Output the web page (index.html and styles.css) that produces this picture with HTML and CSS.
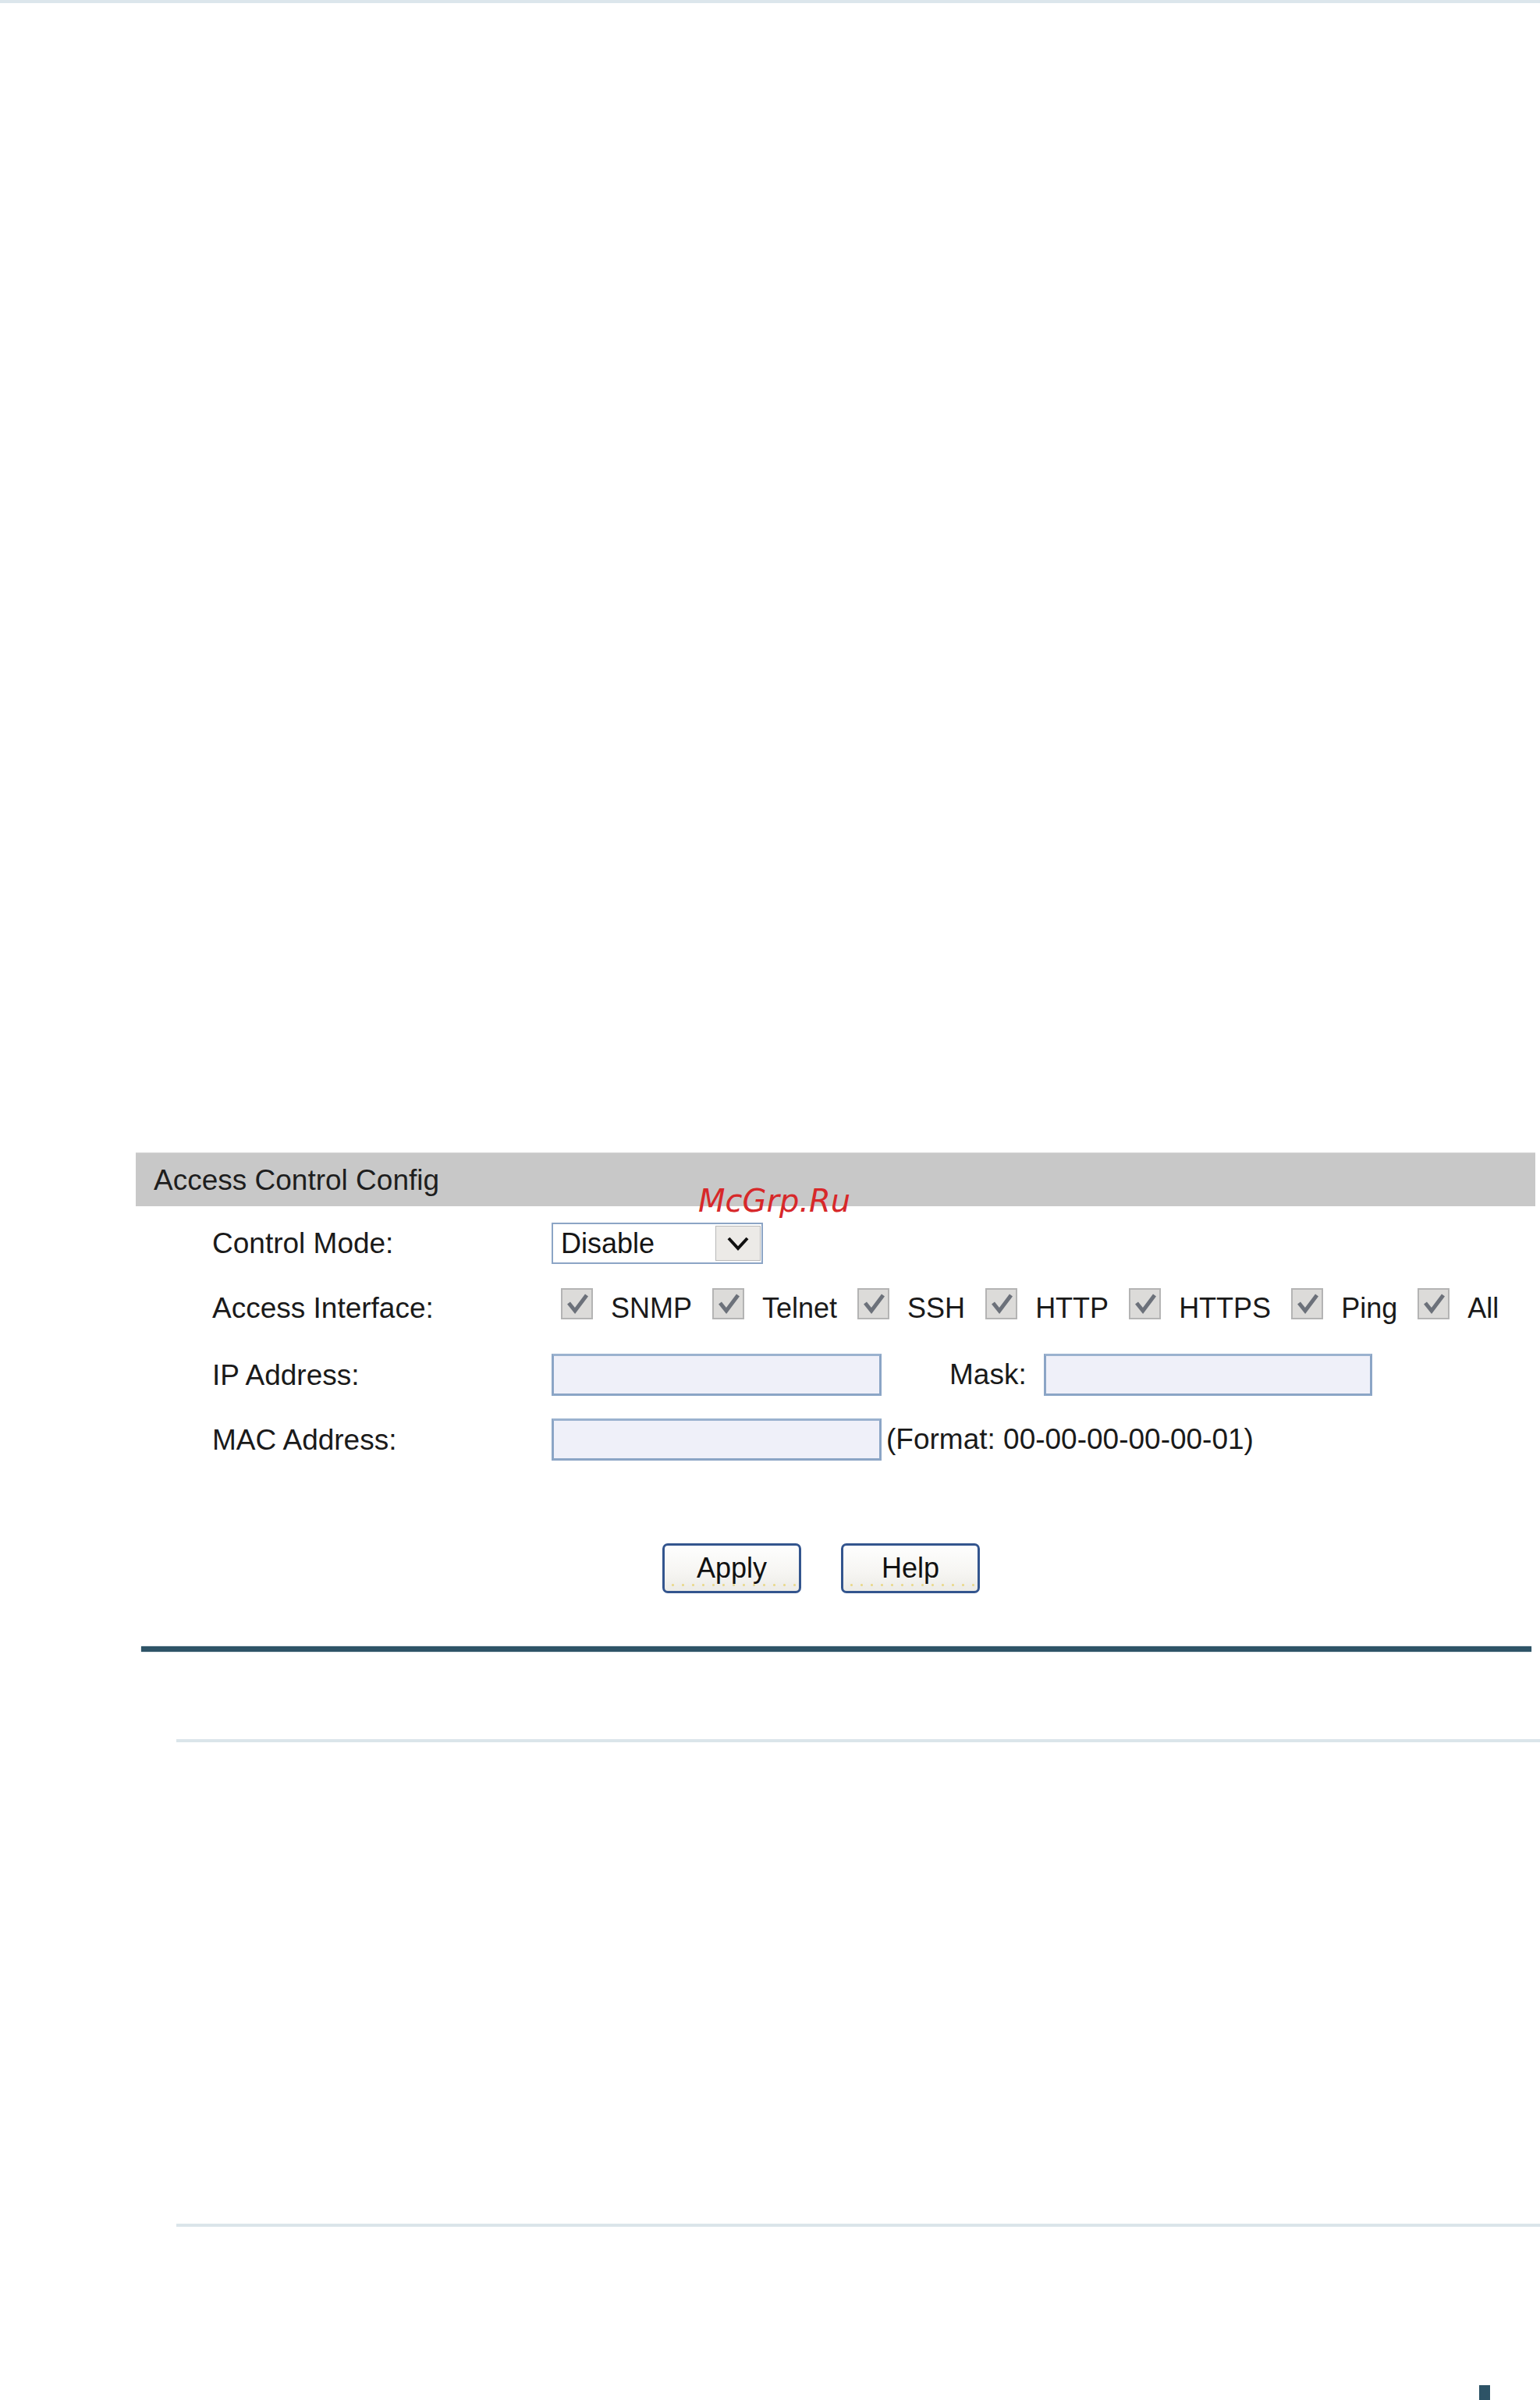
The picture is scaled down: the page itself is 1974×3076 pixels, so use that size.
FILE: index.html
```html
<!DOCTYPE html>
<html lang="en">
<head>
<meta charset="utf-8">
<title>Access Control Config</title>
<link rel="stylesheet" href="styles.css">
</head>
<body>
<div class="topbar"></div>
<main class="page">
  <section class="panel">
    <div class="panel-head">Access Control Config</div>
    <span class="watermark">McGrp.Ru</span>
    <div class="form">
      <div class="row row-mode">
        <span class="label">Control Mode:</span>
        <div class="select">
          <span class="select-value">Disable</span>
          <span class="select-btn">
            <svg width="30" height="22" viewBox="0 0 30 22"><polyline points="3,4 15,17 27,4" fill="none" stroke="#111" stroke-width="4" stroke-linejoin="miter"/></svg>
          </span>
        </div>
      </div>
      <div class="row row-iface">
        <span class="label label-pad">Access Interface:</span>
        <div class="checks">
          <span class="cb"><svg width="36" height="36" viewBox="0 0 36 36"><polyline points="7,17 15,27 30,7" fill="none" stroke="#6c717a" stroke-width="5"/></svg></span><span class="cb-text">SNMP</span>
          <span class="cb"><svg width="36" height="36" viewBox="0 0 36 36"><polyline points="7,17 15,27 30,7" fill="none" stroke="#6c717a" stroke-width="5"/></svg></span><span class="cb-text">Telnet</span>
          <span class="cb"><svg width="36" height="36" viewBox="0 0 36 36"><polyline points="7,17 15,27 30,7" fill="none" stroke="#6c717a" stroke-width="5"/></svg></span><span class="cb-text">SSH</span>
          <span class="cb"><svg width="36" height="36" viewBox="0 0 36 36"><polyline points="7,17 15,27 30,7" fill="none" stroke="#6c717a" stroke-width="5"/></svg></span><span class="cb-text">HTTP</span>
          <span class="cb"><svg width="36" height="36" viewBox="0 0 36 36"><polyline points="7,17 15,27 30,7" fill="none" stroke="#6c717a" stroke-width="5"/></svg></span><span class="cb-text">HTTPS</span>
          <span class="cb"><svg width="36" height="36" viewBox="0 0 36 36"><polyline points="7,17 15,27 30,7" fill="none" stroke="#6c717a" stroke-width="5"/></svg></span><span class="cb-text">Ping</span>
          <span class="cb"><svg width="36" height="36" viewBox="0 0 36 36"><polyline points="7,17 15,27 30,7" fill="none" stroke="#6c717a" stroke-width="5"/></svg></span><span class="cb-text">All</span>
        </div>
      </div>
      <div class="row row-ip">
        <span class="label">IP Address:</span>
        <input class="field" type="text" aria-label="IP Address">
        <span class="label mask-label">Mask:</span>
        <input class="field field-mask" type="text" aria-label="Mask">
      </div>
      <div class="row row-mac">
        <span class="label">MAC Address:</span>
        <input class="field" type="text" aria-label="MAC Address">
        <span class="hint">(Format: 00-00-00-00-00-01)</span>
      </div>
      <div class="buttons">
        <button class="btn" type="button">Apply</button>
        <button class="btn" type="button">Help</button>
      </div>
    </div>
  </section>
  <div class="rule-dark"></div>
  <div class="rule-light rule-1"></div>
  <div class="rule-light rule-2"></div>
  <div class="foot"><span class="foot-tab"></span></div>
</main>
</body>
</html>
```

FILE: styles.css
```css
html, body {
  margin: 0;
  padding: 0;
  background: #ffffff;
  overflow: hidden;
}
body {
  width: 1974px;
  height: 3076px;
  font-family: "Liberation Sans", Arial, sans-serif;
  color: #1a1a1a;
}
.topbar {
  height: 4px;
  background: #dce6ec;
}
.page {
  display: flex;
  flex-direction: column;
}
.panel {
  position: relative;
  margin-top: 1473px;
  margin-left: 174px;
  width: 1794px;
}
.panel-head {
  height: 69px;
  line-height: 69px;
  background: #c8c8c8;
  border-top: 1px solid #d8d8d8;
  box-sizing: border-box;
  padding-left: 23px;
  font-size: 37px;
  color: #1e1e1e;
}
.watermark {
  position: absolute;
  left: 721px;
  top: 42px;
  font-family: "DejaVu Sans", sans-serif;
  font-style: italic;
  font-size: 40px;
  line-height: 40px;
  color: #d7282a;
}
.form {
  padding-left: 98px;
  display: flex;
  flex-direction: column;
}
.row {
  display: flex;
  align-items: center;
}
.label {
  font-size: 37px;
  line-height: 53px;
  white-space: nowrap;
}
.row > .label:first-child {
  width: 435px;
  flex: none;
}
.row-mode {
  margin-top: 21px;
  height: 53px;
}
.select {
  box-sizing: border-box;
  width: 271px;
  height: 53px;
  border: 2px solid #8ca5c5;
  background: #ffffff;
  display: flex;
  align-items: center;
  justify-content: space-between;
}
.select-value {
  padding-left: 10px;
  font-size: 36px;
  line-height: 49px;
  color: #151515;
}
.select-btn {
  box-sizing: border-box;
  width: 58px;
  height: 45px;
  margin-right: 1px;
  background: #eceae7;
  border: 1px solid #b9b9b9;
  display: flex;
  align-items: center;
  justify-content: center;
}
.row-iface {
  margin-top: 31px;
  align-items: flex-start;
}
.label-pad {
  line-height: 40px;
  padding-top: 6px;
}
.checks {
  display: flex;
  align-items: flex-start;
  padding-left: 12px;
}
.cb {
  box-sizing: border-box;
  width: 41px;
  height: 40px;
  border: 2px solid #b4b4b4;
  background: #dcdbd9;
  display: flex;
  align-items: center;
  justify-content: center;
  margin-right: 23px;
  flex: none;
}
.cb-text {
  font-size: 36px;
  line-height: 40px;
  padding-top: 6px;
  margin-right: 26px;
  white-space: nowrap;
}
.row-ip {
  margin-top: 38px;
  height: 54px;
}
.row-mac {
  margin-top: 29px;
  height: 54px;
}
.field {
  box-sizing: border-box;
  width: 423px;
  height: 54px;
  margin: 0;
  padding: 0;
  border: 3px solid #8ba5c6;
  border-top-color: #9bb2cf;
  background: #eff0f9;
  outline: none;
  font-size: 36px;
}
.mask-label {
  margin-left: 87px;
  line-height: 54px;
}
.field-mask {
  margin-left: 22px;
  width: 421px;
}
.hint {
  margin-left: 6px;
  font-size: 37px;
  line-height: 54px;
  white-space: nowrap;
}
.buttons {
  margin-top: 106px;
  padding-left: 577px;
  display: flex;
  gap: 51px;
}
.btn {
  box-sizing: border-box;
  width: 178px;
  height: 64px;
  margin: 0;
  padding: 0;
  border: 3px solid #33558e;
  border-radius: 7px;
  background-color: #f3f2ef;
  background-image:
    radial-gradient(circle, #e9d98c 1.2px, transparent 1.8px),
    linear-gradient(#fefefe, #f6f5f2 60%, #ecebe6);
  background-size: 13px 5px, 100% 100%;
  background-position: 4px calc(100% - 5px), 0 0;
  background-repeat: repeat-x, no-repeat;
  font-family: "Liberation Sans", Arial, sans-serif;
  font-size: 36px;
  color: #111111;
  line-height: 58px;
}
.rule-dark {
  margin-top: 68px;
  margin-left: 181px;
  width: 1782px;
  height: 7px;
  background: #2e5467;
  box-shadow: 0 0 2px #9fb4bf;
}
.rule-light {
  margin-left: 226px;
  height: 4px;
  background: #dbe5ea;
}
.rule-1 {
  margin-top: 112px;
}
.rule-2 {
  margin-top: 617px;
}
.foot {
  margin-top: 203px;
  height: 19px;
  padding-left: 1896px;
}
.foot-tab {
  display: block;
  width: 14px;
  height: 19px;
  background: #2d5366;
}
```
